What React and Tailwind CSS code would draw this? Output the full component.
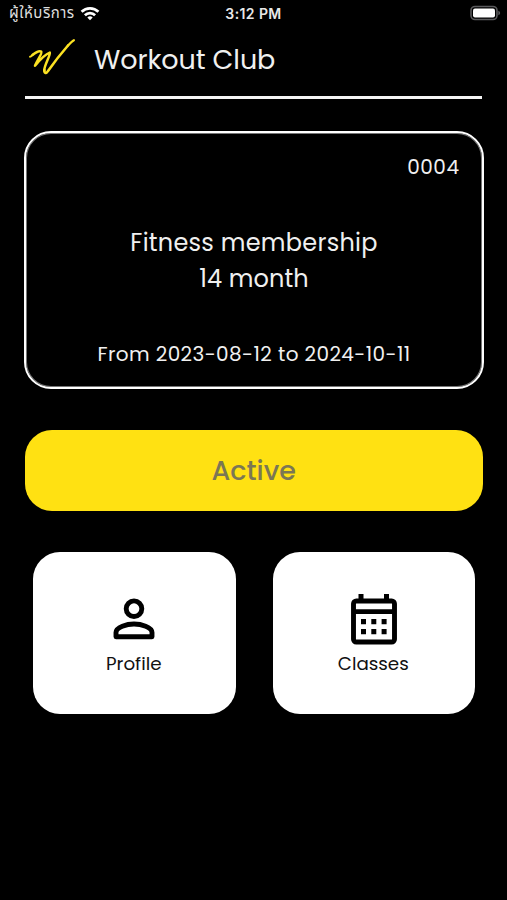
import React from "react";

const poppins = "font-['Poppins','Inter',sans-serif]";

function StatusBar() {
  return (
    <div className="grid h-[27px] grid-cols-3 items-center pl-[9px] pr-[6px] text-white">
      <div className="flex items-center gap-[5px]">
        <span className="w-[66px] whitespace-nowrap font-['Noto_Sans_Thai','Noto_Sans','Inter',sans-serif] text-[15px] leading-none tracking-[0.5px] text-[#dedede]">ผู้ให้บริการ</span>
        <svg width="20" height="15" viewBox="0 0 20 15" className="-mt-px shrink-0" fill="none" stroke="white" strokeWidth="2.7">
          <path d="M1.6 5.8a12 12 0 0 1 16.8 0" />
          <path d="M4.9 9.2a7.2 7.2 0 0 1 10.2 0" />
          <path d="M10 14.3 7.3 11.6a3.9 3.9 0 0 1 5.4 0Z" fill="white" stroke="none" />
        </svg>
      </div>
      <span className="-ml-[3px] text-center font-['Inter',sans-serif] text-[14px] font-semibold leading-[20px] tracking-[0.4px] text-[#e8e8e8]">3:12 PM</span>
      <svg width="32" height="16" viewBox="0 0 32 16" className="-mt-px justify-self-end">
        <rect x="2" y="1.5" width="26" height="13" rx="4" fill="none" stroke="#5a5a5c" strokeWidth="1.6" />
        <rect x="4" y="3.500" width="22" height="9" rx="2" fill="white" />
        <path d="M29.3 5.800c1.4.6 1.800 1.200 1.800 2.200s-.4 1.600-1.800 2.200Z" fill="#5a5a5c" />
      </svg>
    </div>
  );
}

function Logo() {
  return (
    <svg width="50" height="40" viewBox="0 0 50 40" className="shrink-0" fill="none" stroke="#fbe122" strokeLinecap="round" strokeLinejoin="round">
      <path strokeWidth="1.900" d="M5 20.800C6.500 20.800 7 19 8.500 18" />
      <path strokeWidth="2.500" d="M7.500 19C10.500 16.500 14.500 14.500 16.300 15.600C17.800 17 12 24.500 10 29.800C13.500 25.500 19.500 18.500 24.800 16.600C25.800 19 19 29.500 19.300 34.500" />
      <path strokeWidth="2.600" d="M19.300 34C19.300 37.800 21.200 37.800 23.200 34.800C29 26.500 36 17.500 43 9.500" />
      <path strokeWidth="2.200" d="M43 9.500C45 7.300 46.800 5.300 48.900 4.200" />
    </svg>
  );
}

function ProfileIcon() {
  return (
    <svg width="42" height="42" viewBox="0 0 42 42" fill="none" stroke="black" strokeWidth="4.900" strokeLinejoin="round">
      <circle cx="21" cy="10.700" r="7.800" />
      <path d="M3 38.700V34.500C3 29 14 26 21 26S39 29 39 34.500V38.700Z" />
    </svg>
  );
}

function CalendarIcon() {
  return (
    <svg width="46" height="51" viewBox="0 0 46 51">
      <path d="M7.500 0h5v7h-5zM33 0h5v7h-5z" />
      <rect x="2.500" y="7" width="41" height="41" rx="2.800" fill="none" stroke="black" strokeWidth="4.900" />
      <path d="M2 15.200h42v4.700H2zM10 25h5v5.200h-5zM20.300 25h5v5.200h-5zM30.600 25h5v5.200h-5zM10 35h5v5.200h-5zM20.300 35h5v5.200h-5zM30.600 35h5v5.200h-5z" />
    </svg>
  );
}

function Tile({ icon, label, className }) {
  return (
    <button className={`flex h-[162px] w-[202.500px] flex-col items-center rounded-[27px] bg-white text-[#111] ${className}`}>
      <span className="flex h-[93px] items-end justify-center">{icon}</span>
      <span className={`-ml-px mt-[7px] text-[18.300px] leading-[24px] ${poppins}`}>{label}</span>
    </button>
  );
}

export default function App() {
  return (
    <div className={`flex h-[900px] w-[507px] flex-col overflow-hidden bg-black text-[#f0f0f0] ${poppins}`}>
      <StatusBar />
      <header className="ml-[25px] flex h-[72px] w-[457px] shrink-0 items-start border-b-3 border-[#f4f4f4] pt-[9px]">
        <Logo />
        <h1 className="ml-[19px] mt-[4px] whitespace-nowrap text-[27px] leading-[40px] tracking-[-0.08px] font-normal">Workout Club</h1>
      </header>
      <section className="ml-[24px] mt-[32px] flex h-[258px] w-[460px] shrink-0 flex-col items-center rounded-[27px] border-2 border-white shadow-[inset_0_0_0_1px_#777]">
        <p className="mt-[19px] self-end pr-[22.500px] text-[20px] leading-[30px] tracking-[0.500px]">0004</p>
        <p className="mt-[43px] text-[24px] leading-[36px] tracking-[0.250px]">Fitness membership</p>
        <p className="text-[24px] leading-[36px] tracking-[0.100px]">14 month</p>
        <p className="mt-[42px] text-[20px] leading-[30px] tracking-[0.400px]">From 2023-08-12 to 2024-10-11</p>
      </section>
      <button className="ml-[25px] mt-[41px] h-[81px] w-[457.500px] shrink-0 rounded-[27px] bg-[#ffe112] pt-px text-[27px] font-medium text-[#7b7754]">Active</button>
      <div className="mt-[41px] flex gap-[37px] pl-[33px]">
        <Tile icon={<ProfileIcon />} label="Profile" className="[&_svg]:mb-[5px] [&_svg]:-ml-px" />
        <Tile icon={<CalendarIcon />} label="Classes" className="" />
      </div>
    </div>
  );
}
